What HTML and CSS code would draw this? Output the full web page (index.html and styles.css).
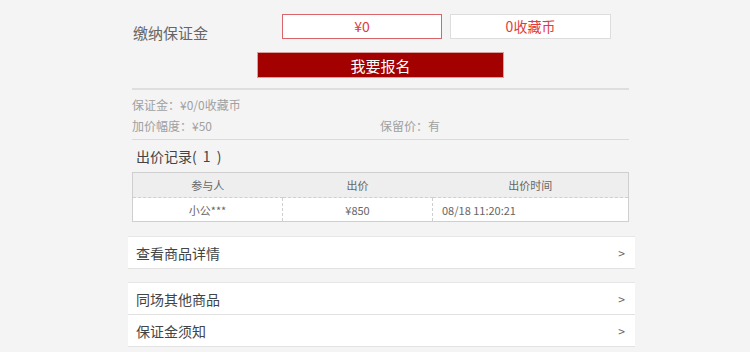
FILE: index.html
```html
<!DOCTYPE html>
<html>
<head>
    <meta charset="utf-8">
    <title>拍品详情</title>
    <link rel="stylesheet" href="styles.css">
</head>
<body>
    <div class="wrap">
        <div class="deposit">
            <div class="pay-row">
                <span class="pay-label">缴纳保证金</span>
                <div class="pay-box active">¥0</div>
                <div class="pay-box">0收藏币</div>
            </div>
            <button class="signup">我要报名</button>

            <div class="info">
                <div class="info-full">保证金：¥0/0收藏币</div>
                <div>加价幅度：¥50</div>
                <div>保留价：有</div>
            </div>

            <div class="record-title">出价记录( 1 )</div>
            <table class="record">
                <thead>
                    <tr>
                        <th class="c1">参与人</th>
                        <th class="c2">出价</th>
                        <th>出价时间</th>
                    </tr>
                </thead>
                <tbody>
                    <tr>
                        <td class="c1">小公***</td>
                        <td class="c2">¥850</td>
                        <td class="time">08/18 11:20:21</td>
                    </tr>
                </tbody>
            </table>
        </div>

        <div class="links first">
            <a class="link" href="#">查看商品详情<span class="arrow">&gt;</span></a>
        </div>
        <div class="links">
            <a class="link" href="#">同场其他商品<span class="arrow">&gt;</span></a>
            <a class="link" href="#">保证金须知<span class="arrow">&gt;</span></a>
        </div>
    </div>
</body>
</html>
```

FILE: styles.css
```css
body {
    margin: 0;
    background: #f4f4f4;
    font-family: "Noto Sans CJK SC", "Open Sans", sans-serif;
    color: #444;
}

.wrap {
    width: 507px;
    margin-left: 128px;
}

.deposit {
    padding: 14px 6px 0 4px;
}

.pay-row {
    display: flex;
    align-items: flex-start;
}

/* label sits a little lower than the boxes */
.pay-label {
    width: 149px;
    padding: 6px 0 0 1px;
    margin-bottom: -6px;
    font-size: 15px;
    line-height: 25px;
    color: #666;
}

.pay-box {
    box-sizing: border-box;
    width: 161px;
    height: 25px;
    line-height: 23px;
    text-align: center;
    font-size: 14px;
    color: #e03c3c;
    background: #fff;
    border: 1px solid #ddd;
}

.pay-box.active {
    width: 160px;
    margin-right: 8px;
    border-color: #d9656b;
}

.signup {
    display: block;
    box-sizing: border-box;
    width: 247px;
    height: 26px;
    margin: 13px auto 0;
    padding: 0;
    font-family: inherit;
    font-size: 15px;
    color: #fff;
    background: #a30000;
    border: 1px solid #d9a0a0;
    cursor: pointer;
}

.info {
    display: grid;
    grid-template-columns: 248px 1fr;
    margin-top: 10px;
    padding: 4px 0 3px;
    border-top: 2px solid #dedede;
    border-bottom: 1px solid #dadada;
    font-size: 12px;
    line-height: 21px;
    color: #a0a0a0;
}

.info-full {
    grid-column: span 2;
}

.record-title {
    padding-left: 4px;
    font-size: 14px;
    line-height: 32px;
    word-spacing: 3px;
    color: #444;
}

.record {
    width: 100%;
    border-collapse: collapse;
    border: 1px solid #cfcfcf;
    font-size: 11px;
    color: #666;
    background: #fff;
}

.record th {
    height: 24px;
    padding: 0;
    font-weight: normal;
    background: #eeeeee;
    border-bottom: 1px dashed #cfcfcf;
}

.record td {
    height: 23px;
    padding: 0;
    text-align: center;
}

.record td.c1,
.record td.c2 {
    border-right: 1px dashed #cfcfcf;
}

.c1 {
    width: 149px;
}

.c2 {
    width: 149px;
}

.record td.time {
    text-align: left;
    padding-left: 9px;
}

.links {
    margin-top: 13px;
    background: #fff;
    border-top: 1px solid #e6e6e6;
}

.links.first {
    margin-top: 14px;
}

.link {
    display: flex;
    justify-content: space-between;
    align-items: center;
    height: 31px;
    padding: 0 10px 0 8px;
    border-bottom: 1px solid #e2e2e2;
    font-size: 14px;
    color: #444;
    text-decoration: none;
}

.arrow {
    font-size: 12px;
    color: #666;
}
```
